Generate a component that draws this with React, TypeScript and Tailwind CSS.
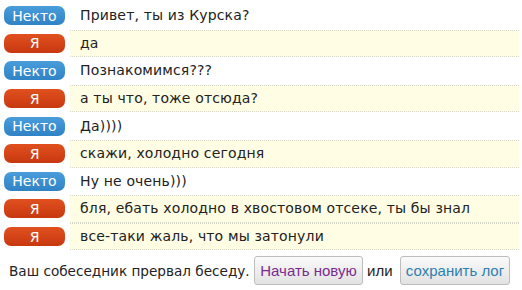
const MESSAGES: { me: boolean; text: string }[] = [
  { me: false, text: "Привет, ты из Курска?" },
  { me: true, text: "да" },
  { me: false, text: "Познакомимся???" },
  { me: true, text: "а ты что, тоже отсюда?" },
  { me: false, text: "Да))))" },
  { me: true, text: "скажи, холодно сегодня" },
  { me: false, text: "Ну не очень)))" },
  { me: true, text: "бля, ебать холодно в хвостовом отсеке, ты бы знал" },
  { me: true, text: "все-таки жаль, что мы затонули" },
];

function Badge({ me }: { me: boolean }) {
  return (
    <span
      className={
        me
          ? "flex h-[19px] w-[61px] items-center justify-center rounded-[7px] bg-gradient-to-b from-[#e0501f] to-[#c83810] text-[14px] leading-none text-white"
          : "flex h-[19px] w-[61px] items-center justify-center rounded-[7px] bg-gradient-to-b from-[#4a9ddb] to-[#2f82c4] text-[14px] leading-none text-white"
      }
    >
      {me ? "Я" : "Некто"}
    </span>
  );
}

export default function App() {
  return (
    <div className="h-[290px] w-[522px] overflow-hidden bg-white font-['DejaVu_Sans',Verdana,sans-serif] text-[#222]">
      <div className="flex flex-col pt-[2px] pr-[3px]">
        {MESSAGES.map((m, i) => (
          <div key={i} className="flex h-[27.6px] items-center">
            <div className="flex w-[70px] shrink-0 items-center pl-[4px]">
              <Badge me={m.me} />
            </div>
            <div
              className={
                m.me
                  ? "flex h-full flex-1 items-center whitespace-nowrap border-y border-dotted border-[#d8d8c8] bg-[#fffde3] pl-[10px] pr-2 text-[14px] tracking-[0.15px]"
                  : "flex h-full flex-1 items-center whitespace-nowrap pl-[10px] pr-2 text-[14px] tracking-[0.15px]"
              }
            >
              {m.text}
            </div>
          </div>
        ))}
      </div>
      <div className="mt-[6px] flex items-center whitespace-nowrap pl-[9px]">
        <span className="w-[245px] shrink-0 text-[13.6px]">Ваш собеседник прервал беседу.</span>
        <button className="h-[29px] w-[109px] shrink-0 rounded-[3px] border border-[#bdbdbd] bg-gradient-to-b from-[#fafafa] to-[#e2e2e2] font-['Liberation_Sans',Arial,sans-serif] text-[15px] text-[#7b2b8e]">
          Начать новую
        </button>
        <span className="ml-[4px] w-[33px] shrink-0 font-['Liberation_Sans',Arial,sans-serif] text-[15px]">или</span>
        <button className="h-[29px] w-[110px] shrink-0 rounded-[3px] border border-[#bdbdbd] bg-gradient-to-b from-[#fafafa] to-[#e2e2e2] font-['Liberation_Sans',Arial,sans-serif] text-[15px] text-[#2d7fb0]">
          сохранить лог
        </button>
      </div>
    </div>
  );
}
